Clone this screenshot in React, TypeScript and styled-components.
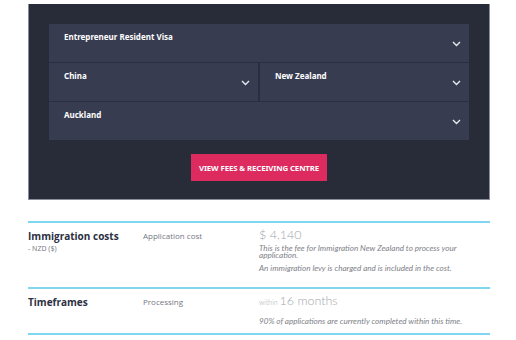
import { ReactNode } from 'react';
import styled, { createGlobalStyle } from 'styled-components';

const GlobalStyle = createGlobalStyle`
  body {
    margin: 0;
    background: #ffffff;
    font-family: 'Noto Sans', 'Open Sans', sans-serif;
  }
`;

const Chevron = () => (
  <svg width='9' height='6' viewBox='0 0 9 6' fill='none'>
    <path d='M1 1l3.5 3.5L8 1' stroke='#e8e9ef' strokeWidth='1.4' />
  </svg>
);

interface IRow {
  heading: string;
  sub?: string;
  label: string;
  prefix?: string;
  value: string;
  notes: string[];
  height: number;
  noteGap: number;
}

const rows: IRow[] = [
  {
    heading: 'Immigration costs',
    sub: '- NZD ($)',
    label: 'Application cost',
    value: '$ 4,140',
    notes: [
      'This is the fee for Immigration New Zealand to process your application.',
      'An immigration levy is charged and is included in the cost.',
    ],
    height: 66,
    noteGap: 3,
  },
  {
    heading: 'Timeframes',
    label: 'Processing',
    prefix: 'within',
    value: '16 months',
    notes: ['90% of applications are currently completed within this time.'],
    height: 46,
    noteGap: 9,
  },
];

const Select = ({ children }: { children: ReactNode }) => (
  <SSelect>
    <SSelectText>{children}</SSelectText>
    <Chevron />
  </SSelect>
);

export default function App() {
  return (
    <>
      <GlobalStyle />
      <SPage>
        <SPanel>
          <SSelects>
            <Select>Entrepreneur Resident Visa</Select>
            <SPair>
              <Select>China</Select>
              <Select>New Zealand</Select>
            </SPair>
            <Select>Auckland</Select>
          </SSelects>
          <SButton>VIEW FEES &amp; RECEIVING CENTRE</SButton>
        </SPanel>
        <STable>
          {rows.map((row) => (
            <SRow key={row.heading} $height={row.height}>
              <SHeadingCell>
                <SHeading>{row.heading}</SHeading>
                {row.sub && <SSub>{row.sub}</SSub>}
              </SHeadingCell>
              <SLabel>{row.label}</SLabel>
              <SValueCell>
                <SValue $gap={row.noteGap}>
                  {row.prefix && <SSmall>{row.prefix} </SSmall>}
                  {row.value}
                </SValue>
                {row.notes.map((note) => (
                  <SNote key={note}>{note}</SNote>
                ))}
              </SValueCell>
            </SRow>
          ))}
        </STable>
      </SPage>
    </>
  );
}

const SPage = styled.div`
  width: 462px;
  margin: 4px 0 0 28px;
`;

const SPanel = styled.div`
  background: #272c38;
  border: 1px solid #8a8d95;
  border-top: none;
  padding: 20px 20px 18px;
  display: flex;
  flex-direction: column;
  align-items: center;
`;

const SSelects = styled.div`
  width: 100%;
  display: flex;
  flex-direction: column;
  gap: 1px;
  background: #2a2f3f;
`;

const SPair = styled.div`
  display: grid;
  grid-template-columns: 1fr 1fr;
  gap: 2px;
`;

const SSelect = styled.div`
  height: 38px;
  box-sizing: border-box;
  background: #383c50;
  display: flex;
  justify-content: space-between;
  padding: 7px 8px 0 15px;

  svg {
    margin-top: 10px;
  }
`;

const SSelectText = styled.span`
  color: #ffffff;
  font-weight: 700;
  font-size: 8px;
  line-height: 12px;
`;

const SButton = styled.button`
  margin-top: 14px;
  height: 27px;
  width: 136px;
  border: none;
  background: #dd2a5f;
  color: #ffffff;
  font-family: 'Noto Sans', sans-serif;
  font-weight: 700;
  font-size: 7.8px;
  letter-spacing: -0.1px;
  padding: 0;
`;

const STable = styled.div`
  margin-top: 21px;
  border-top: 2px solid #80d6ef;
`;

const SRow = styled.div<{ $height: number }>`
  display: grid;
  grid-template-columns: 115px 116px 1fr;
  align-items: start;
  box-sizing: border-box;
  height: ${({ $height }) => $height}px;
  border-bottom: 2px solid #80d6ef;
  padding-top: 5px;
`;

const SHeadingCell = styled.div`
  display: flex;
  flex-direction: column;
`;

const SHeading = styled.span`
  color: #2b3042;
  font-size: 10px;
  font-weight: 700;
  line-height: 16px;
  font-family: 'Open Sans', sans-serif;
`;

const SSub = styled.span`
  color: #7c7f88;
  font-size: 7px;
  line-height: 9px;
`;

const SLabel = styled.span`
  color: #74777f;
  font-size: 8px;
  line-height: 16px;
  font-family: 'Open Sans', sans-serif;
`;

const SValueCell = styled.div`
  display: flex;
  flex-direction: column;
  gap: 6px;
`;

const SValue = styled.span<{ $gap: number }>`
  color: #a3a6ad;
  font-size: 12.5px;
  line-height: 14px;
  font-family: 'Lato', sans-serif;
  font-weight: 300;
  margin-bottom: ${({ $gap }) => $gap - 6}px;
`;

const SSmall = styled.span`
  font-size: 7px;
`;

const SNote = styled.span`
  color: #7e8188;
  font-size: 8.1px;
  line-height: 7px;
  font-style: italic;
  font-family: 'Lato', sans-serif;
  max-width: 205px;
`;
